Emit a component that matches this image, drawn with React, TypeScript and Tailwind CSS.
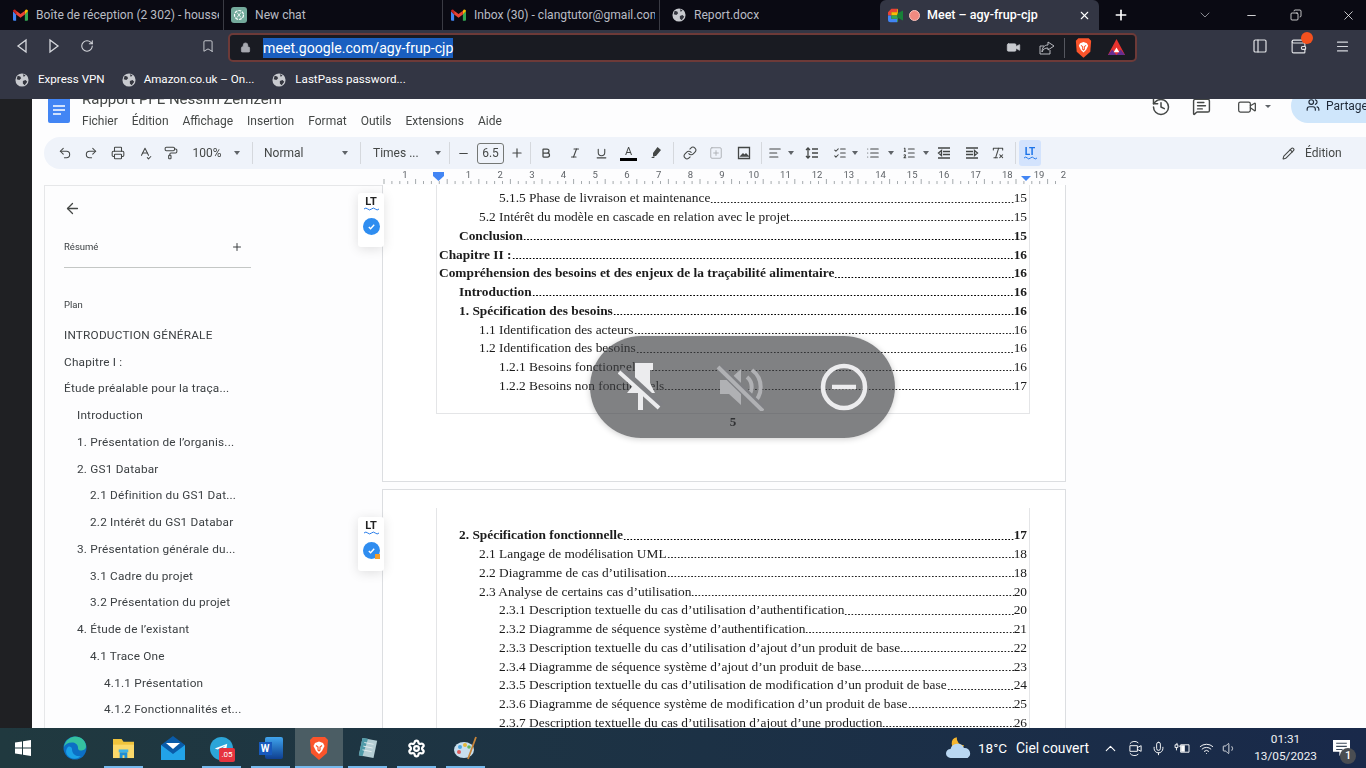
import React from 'react';
import {
  ArrowLeft, Bold, Bookmark, ChevronDown, ChevronUp, Copy, History, Italic, Link, List, ListChecks, ListOrdered, Lock, Menu, MessageSquareText, Mic, Minus, PaintRoller, PanelLeft,
  Pencil, Plus, Printer, Redo2, RotateCw, Settings, SpellCheck, SquarePlus, Underline, Undo2, Users, Video, Volume1, Wallet, Wifi, X,
  AlignLeft, RemoveFormatting,
} from 'lucide-react';

const sans = 'font-["Roboto","Liberation_Sans",sans-serif]';

const GmailIcon = () => (
  <svg viewBox="0 0 24 18" className="w-[15px] h-[12px] shrink-0">
    <path d="M0 3v13.5A1.5 1.5 0 0 0 1.5 18H5V8z" fill="#4285f4" />
    <path d="M19 8v10h3.5a1.5 1.5 0 0 0 1.5-1.500V3z" fill="#34a853" />
    <path d="M19 2v6l5-5c0-2-2.500-3.500-4-2z" fill="#fbbc04" />
    <path d="M5 8V2l7 5.500L19 2v6l-7 5.500z" fill="#ea4335" />
    <path d="M0 3c0-2 2.500-3.500 4-2l1 1v6z" fill="#c5221f" />
  </svg>
);

const GlobeIcon = ({ size = 'w-[14px] h-[14px]' }: { size?: string }) => (
  <svg viewBox="0 0 16 16" className={`${size} shrink-0`}>
    <circle cx="8" cy="8" r="7.500" fill="#c8cacf" />
    <path d="M3 3l3 1 1 2-2 2-3-1zM9 9l3-1 2 2-3 4-2-2zM9 1.500l3 1-2 2z" fill="#34363f" />
  </svg>
);

const ChatIcon = () => (
  <svg viewBox="0 0 16 16" className="w-[16px] h-[16px] shrink-0">
    <rect width="16" height="16" rx="3" fill="#74aa9c" />
    <circle cx="8" cy="8" r="4.500" fill="none" stroke="#fff" strokeWidth="1.200" strokeDasharray="3 1" />
    <path d="M6 5.500l4 5M10 5.500l-4 5" stroke="#fff" strokeWidth="0.800" />
  </svg>
);

const MeetIcon = () => (
  <svg viewBox="0 0 18 16" className="w-[15px] h-[15px] shrink-0">
    <path d="M0 4l4-4h7v4H4v4H0z" fill="#ea4335" />
    <path d="M0 8h4v4h7v4H3a3 3 0 0 1-3-3z" fill="#4285f4" />
    <path d="M11 0a1 1 0 0 1 1 1v4l-1 3V4z" fill="#fbbc04" />
    <path d="M11 8l1 3v4a1 1 0 0 1-1 1z" fill="#34a853" />
    <path d="M11 8l1-3 6-3v12l-6-3z" fill="#188038" />
    <path d="M4 4h7v4H4z" fill="#fbbc04" />
    <path d="M4 8h7v4H4z" fill="#34a853" />
  </svg>
);

const BraveIcon = ({ size }: { size: string }) => (
  <svg viewBox="0 0 20 24" className={size}>
    <path d="M4 1h12l3 3-1 13-8 7-8-7L1 4z" fill="#fb542b" />
    <path d="M6 7l4-1.500L14 7l1.500 3-2.500 5-3 3-3-3-2.500-5z" fill="#fff" />
    <path d="M7 9.500l2 1.500v3l1 1 1-1v-3l2-1.500" fill="none" stroke="#fb542b" strokeWidth="1.200" />
  </svg>
);

const BatIcon = () => (
  <svg viewBox="0 0 20 20" className="w-[19px] h-[19px]">
    <path d="M10 1l9 17H1z" fill="#e8332e" />
    <path d="M1 18l4.500-6L10 18z" fill="#662d91" />
    <path d="M19 18l-4.500-6L10 18z" fill="#662d91" />
    <path d="M10 10l3 5H7z" fill="#fff" />
  </svg>
);

const Tab = ({ width, pad, icon, title, sep = true }: { width: string; pad: string; icon: React.ReactNode; title: string; sep?: boolean }) => (
  <div className={`${width} ${pad} h-[30px] flex items-center gap-[8px] pr-[4px] overflow-hidden shrink-0 ${sep ? 'border-r border-[#3a3b44]' : ''}`}>
    {icon}
    <span className="text-[12.100px] text-[#b9bcc4] whitespace-nowrap overflow-hidden">{title}</span>
  </div>
);

const Chrome = () => (
  <div className={`${sans} shrink-0`}>
    <div className="h-[30px] bg-[#0a0a13] flex items-center">
      <Tab width="w-[224px]" pad="pl-[13px]" icon={<GmailIcon />} title="Boîte de réception (2 302) - housse" />
      <Tab width="w-[219px]" pad="pl-[7px]" icon={<ChatIcon />} title="New chat" />
      <Tab width="w-[217px]" pad="pl-[8px]" icon={<GmailIcon />} title="Inbox (30) - clangtutor@gmail.com" />
      <Tab width="w-[220px]" pad="pl-[12px]" icon={<GlobeIcon />} title="Report.docx" sep={false} />
      <div className="w-[219px] h-[30px] bg-[#333644] rounded-t-[6px] flex items-center pl-[8px] pr-[8px]">
        <MeetIcon />
        <span className="ml-[6px] w-[11px] h-[11px] rounded-full bg-[#f08a80] border border-[#fbc4be]" />
        <span className="ml-[7px] text-[12.500px] font-medium text-white whitespace-nowrap">Meet – agy-frup-cjp</span>
        <X size={13} className="ml-auto text-white" />
      </div>
      <Plus size={16} strokeWidth={2.500} className="ml-[14px] text-white" />
      <ChevronDown size={16} strokeWidth={1} className="ml-[68px] text-[#c7c9cf]" />
      <Minus size={13} strokeWidth={1.500} className="ml-[32px] text-white" />
      <Copy size={12} strokeWidth={1.500} className="ml-[32px] text-white -scale-x-100" />
      <X size={15} strokeWidth={1.200} className="ml-[39px] text-white" />
    </div>
    <div className="h-[69px] bg-[#333644]">
      <div className="h-[32px] flex items-center relative">
        <svg viewBox="0 0 12 16" className="ml-[16px] w-[12px] h-[16px]"><path d="M10 2L2 8l8 6z" fill="none" stroke="#d6d8dd" strokeWidth="1.300" /></svg>
        <svg viewBox="0 0 12 16" className="ml-[20px] w-[12px] h-[16px]"><path d="M2 2l8 6-8 6z" fill="none" stroke="#d6d8dd" strokeWidth="1.300" /></svg>
        <RotateCw size={14} strokeWidth={1.800} className="ml-[20px] text-[#d6d8dd]" />
        <Bookmark size={14} strokeWidth={1.500} className="ml-[107px] text-[#d6d8dd]" />
        <div className="ml-[13px] mt-[3px] w-[909px] h-[29px] bg-[#191b22] border-2 border-[#6d3a38] rounded-[5px] flex items-center">
          <Lock size={11} fill="#a7a9b0" strokeWidth={1.500} className="ml-[10px] text-[#a7a9b0]" />
          <span className="ml-[12px] bg-[#1a5fc0] text-white text-[14.150px] leading-[20px]">meet.google.com/agy-frup-cjp</span>
          <Video size={15} fill="#c9cbd0" strokeWidth={1} className="ml-auto text-[#c9cbd0]" />
          <svg viewBox="0 0 16 16" className="ml-[18px] w-[16px] h-[16px]">
            <path d="M11 10v4H1V6h4M9 2l6 4-6 4V8C6 8 4 9 3 12c0-4 2-7 6-7z" fill="none" stroke="#c9cbd0" strokeWidth="0.900" />
          </svg>
          <span className="ml-[9px] w-px h-[20px] bg-[#55575f]" />
          <span className="ml-[10px] flex"><BraveIcon size="w-[17px] h-[21px]" /></span>
          <span className="ml-[15px] mr-[9px] flex"><BatIcon /></span>
        </div>
        <PanelLeft size={16} strokeWidth={1.800} className="ml-[115px] text-[#e2e3e6]" />
        <span className="ml-[22px] relative flex">
          <Wallet size={17} strokeWidth={1.600} className="text-[#e2e3e6]" />
          <span className="absolute -top-[6px] left-[11px] w-[12px] h-[12px] rounded-full bg-[#f4511e]" />
        </span>
        <Menu size={15} strokeWidth={1.800} className="ml-[28px] text-[#d6d8dd]" />
      </div>
      <div className="h-[33px] flex items-center text-[11.600px] text-white pl-[15px] pt-[3px]">
        <GlobeIcon />
        <span className="ml-[9px]">Express VPN</span>
        <span className="ml-[17px]"><GlobeIcon /></span>
        <span className="ml-[8px]">Amazon.co.uk – On...</span>
        <span className="ml-[18px]"><GlobeIcon /></span>
        <span className="ml-[9px]">LastPass password...</span>
      </div>
    </div>
  </div>
);

const Sep = ({ ml = 'ml-0' }: { ml?: string }) => <span className={`${ml} w-px h-[22px] bg-[#d5d8dd] shrink-0`} />;

const Drop = ({ w }: { w: string }) => (
  <span className={`${w} flex justify-center shrink-0`}>
    <span className="border-x-[3.500px] border-x-transparent border-t-[4px] border-t-[#5f6368]" />
  </span>
);

const Cell = ({ w, children }: { w: string; children: React.ReactNode }) => (
  <span className={`${w} flex items-center justify-center shrink-0 text-[#444746]`}>{children}</span>
);

const ICON = { size: 14, strokeWidth: 1.800 };

const Glyph = ({ d, fill }: { d: string; fill?: boolean }) => (
  <svg viewBox="0 0 14 14" className="w-[14px] h-[14px]">
    <path d={d} fill={fill ? '#444746' : 'none'} stroke={fill ? 'none' : '#444746'} strokeWidth="1.300" />
  </svg>
);

const DocHeader = () => (
  <div className={`h-[38px] overflow-hidden flex ${sans}`}>
    <svg viewBox="0 0 22 32" className="ml-[16px] -mt-[8px] w-[22px] h-[32px] shrink-0">
      <path d="M2 0h13l7 7v23a2 2 0 0 1-2 2H2a2 2 0 0 1-2-2V2a2 2 0 0 1 2-2z" fill="#4285f4" />
      <path d="M5 15h12M5 19h12M5 23h8" stroke="#fff" strokeWidth="1.500" />
    </svg>
    <div className="ml-[12px] min-w-0">
      <div className="-mt-[9px] h-[18px] flex items-center text-[15px] text-[#444746] whitespace-nowrap">
        Rapport PFE Nessim Zemzem
      </div>
      <div className="mt-[4px] flex gap-[14px] text-[12px] text-[#444746] whitespace-nowrap">
        <span>Fichier</span><span>Édition</span><span>Affichage</span><span>Insertion</span>
        <span>Format</span><span>Outils</span><span>Extensions</span><span>Aide</span>
      </div>
    </div>
    <div className="ml-auto flex items-start text-[#444746]">
      <History size={20} strokeWidth={1.800} className="-mt-[2px]" />
      <MessageSquareText size={19} strokeWidth={1.800} className="ml-[21px] -mt-[2px]" />
      <Video size={20} strokeWidth={1.500} className="ml-[26px] -mt-[2px] mr-[8px]" />
      <span className="mt-[6px] border-x-[3px] border-x-transparent border-t-[3.500px] border-t-[#5f6368]" />
      <div className="ml-[20px] -mt-[10px] w-[75px] h-[34px] bg-[#cfe6fb] rounded-l-[18px] pl-[15px] pt-[8px] flex items-start gap-[6px] text-[12px] text-[#1f2937] overflow-hidden">
        <Users size={14} strokeWidth={2} className="shrink-0 mt-[1px]" />
        <span>Partager</span>
      </div>
    </div>
  </div>
);

const DocToolbar = () => (
  <div className={`ml-[12px] h-[32px] bg-[#eff3fa] rounded-l-[16px] flex items-center pl-[8px] text-[12px] text-[#444746] ${sans}`}>
    <Cell w="w-[26px]"><Undo2 {...ICON} /></Cell>
    <Cell w="w-[26px]"><Redo2 {...ICON} /></Cell>
    <Cell w="w-[28px]"><Printer {...ICON} /></Cell>
    <Cell w="w-[26px]"><SpellCheck {...ICON} /></Cell>
    <Cell w="w-[26px]"><PaintRoller {...ICON} /></Cell>
    <Cell w="w-[46px]">100%</Cell>
    <Drop w="w-[14px]" />
    <Sep ml="ml-[8px]" />
    <span className="w-[84px] pl-[11px]">Normal</span>
    <Drop w="w-[16px]" />
    <Sep ml="ml-[7px]" />
    <span className="w-[72px] pl-[12px] whitespace-nowrap">Times ...</span>
    <Drop w="w-[10px]" />
    <Sep ml="ml-[6px]" />
    <Cell w="w-[27px]"><Minus size={13} /></Cell>
    <span className="w-[27px] h-[21px] border border-[#747775] rounded-[3px] flex items-center justify-center shrink-0">6.5</span>
    <Cell w="w-[26px]"><Plus size={14} /></Cell>
    <Sep />
    <Cell w="w-[30px]"><Bold size={12} strokeWidth={2.500} /></Cell>
    <Cell w="w-[27px]"><Italic size={12} strokeWidth={2.200} /></Cell>
    <Cell w="w-[27px]"><Underline size={13} strokeWidth={2} /></Cell>
    <span className="w-[27px] flex flex-col items-center shrink-0 text-[11px] leading-[13px]">A<span className="w-[17px] h-[3px] bg-black" /></span>
    <Cell w="w-[28px]"><Glyph fill d="M8.500 1l3.500 3-5 6H4v-3zM2 12l2-1.500h2L5 12z" /></Cell>
    <Sep ml="ml-[3px]" />
    <Cell w="w-[31px]"><Link {...ICON} /></Cell>
    <Cell w="w-[22px]"><SquarePlus size={14} strokeWidth={1.500} className="text-[#a8abb0]" /></Cell>
    <Cell w="w-[33px]"><Glyph d="M1.500 1.500h11v11h-11zM4 10l2-2 1.500 1.500L9 8l2 2z" /></Cell>
    <Sep ml="ml-[1px]" />
    <Cell w="w-[26px]"><AlignLeft {...ICON} /></Cell>
    <Drop w="w-[6px]" />
    <Cell w="w-[36px]"><Glyph d="M3 2v10M1 4l2-2 2 2M1 10l2 2 2-2M7 3h6M7 7h6M7 11h6" /></Cell>
    <Cell w="w-[20px]"><ListChecks {...ICON} /></Cell>
    <Drop w="w-[10px]" />
    <Cell w="w-[26px]"><List {...ICON} /></Cell>
    <Drop w="w-[10px]" />
    <Cell w="w-[26px]"><ListOrdered {...ICON} /></Cell>
    <Drop w="w-[8px]" />
    <Cell w="w-[28px]"><Glyph d="M1 2h12M6 5.500h7M6 8.500h7M1 12h12M4.500 4.500L1.500 7l3 2.500z" /></Cell>
    <Cell w="w-[27px]"><Glyph d="M1 2h12M1 5.500h7M1 8.500h7M1 12h12M9.500 4.500l3 2.500-3 2.500z" /></Cell>
    <Cell w="w-[26px]"><RemoveFormatting {...ICON} /></Cell>
    <Sep ml="ml-[4px]" />
    <span className="ml-[3px] w-[22px] h-[26px] bg-[#d3e3fd] rounded-[3px] flex flex-col items-center justify-center shrink-0 text-[#1a73e8] text-[10px] leading-[9px] font-bold">
      LT
      <svg viewBox="0 0 14 4" className="w-[13px] h-[4px]"><path d="M0 2q2-2 3.500 0t3.500 0 3.500 0 3.500 0" fill="none" stroke="#1a73e8" /></svg>
    </span>
    <Pencil size={13} strokeWidth={2} className="ml-[241px]" />
    <span className="ml-[10px]">Édition</span>
  </div>
);

const Ruler = () => {
  const nums = ['1', '', '1', '2', '3', '4', '5', '6', '7', '8', '9', '10', '11', '12', '13', '14', '15', '16', '17', '18', '19'];
  const ticks = Array.from({ length: 86 }, (_, i) => i);
  return (
    <div className="h-[16px] pl-[350px]">
      <svg width="684" height="16" className="block">
        {ticks.map((i) => (
          <line key={i} x1={i * 7.900 + 2} x2={i * 7.900 + 2} y1={i % 4 === 0 ? 10 : 12} y2={15} stroke="#80868b" strokeWidth="0.700" />
        ))}
        {nums.map((n, i) => (
          <text key={i} x={23 + i * 31.700} y={9} fontSize="9.500" fill="#5f6368" textAnchor="middle" fontFamily="Roboto, sans-serif">{n}</text>
        ))}
        <text x={684} y={9} fontSize="9.500" fill="#5f6368" textAnchor="end" fontFamily="Roboto, sans-serif">2</text>
        <path d="M51 3h11v4l-5.500 5L51 7z" fill="#4285f4" />
        <path d="M639 7h10l-5 5z" fill="#4285f4" />
      </svg>
    </div>
  );
};

const outline: [string, string][] = [
  ['INTRODUCTION GÉNÉRALE', 'pl-0'],
  ['Chapitre I :', 'pl-0'],
  ['Étude préalable pour la traça...', 'pl-0'],
  ['Introduction', 'pl-[13px]'],
  ['1. Présentation de l’organis...', 'pl-[13px]'],
  ['2. GS1 Databar', 'pl-[13px]'],
  ['2.1 Définition du GS1 Dat...', 'pl-[26px]'],
  ['2.2 Intérêt du GS1 Databar', 'pl-[26px]'],
  ['3. Présentation générale du...', 'pl-[13px]'],
  ['3.1 Cadre du projet', 'pl-[26px]'],
  ['3.2 Présentation du projet', 'pl-[26px]'],
  ['4. Étude de l’existant', 'pl-[13px]'],
  ['4.1 Trace One', 'pl-[26px]'],
  ['4.1.1 Présentation', 'pl-[40px]'],
  ['4.1.2 Fonctionnalités et...', 'pl-[40px]'],
];

const Sidebar = () => (
  <div className={`w-[338px] shrink-0 border-l border-t border-[#e6e7e9] pl-[19px] ${sans} text-[#3c4043]`}>
    <ArrowLeft size={17} strokeWidth={1.800} className="mt-[14px] text-[#444746]" />
    <div className="mt-[23px] w-[187px] pb-[13px] border-b border-[#c4c7c5] flex items-center justify-between text-[9.500px]">
      <span>Résumé</span>
      <Plus size={12} strokeWidth={2} className="mr-[8px]" />
    </div>
    <div className="mt-[31px] text-[9.500px] leading-[12px]">Plan</div>
    <div className="mt-[11px] text-[11.800px] tracking-[0.2px]">
      {outline.map(([title, indent], i) => (
        <div key={i} className={`h-[26.750px] flex items-center whitespace-nowrap ${indent}`}>{title}</div>
      ))}
    </div>
  </div>
);

interface Entry { title: string; page: string; indent: string; bold?: boolean }

const firstPage: Entry[] = [
  { title: '5.1.5 Phase de livraison et maintenance', page: '15', indent: 'pl-[60px]' },
  { title: '5.2 Intérêt du modèle en cascade en relation avec le projet', page: '15', indent: 'pl-[40px]' },
  { title: 'Conclusion', page: '15', indent: 'pl-[20px]', bold: true },
  { title: 'Chapitre II :', page: '16', indent: 'pl-0', bold: true },
  { title: 'Compréhension des besoins et des enjeux de la traçabilité alimentaire', page: '16', indent: 'pl-0', bold: true },
  { title: 'Introduction', page: '16', indent: 'pl-[20px]', bold: true },
  { title: '1. Spécification des besoins', page: '16', indent: 'pl-[20px]', bold: true },
  { title: '1.1 Identification des acteurs', page: '16', indent: 'pl-[40px]' },
  { title: '1.2 Identification des besoins', page: '16', indent: 'pl-[40px]' },
  { title: '1.2.1 Besoins fonctionnels', page: '16', indent: 'pl-[60px]' },
  { title: '1.2.2 Besoins non fonctionnels', page: '17', indent: 'pl-[60px]' },
];

const secondPage: Entry[] = [
  { title: '2. Spécification fonctionnelle', page: '17', indent: 'pl-[20px]', bold: true },
  { title: '2.1 Langage de modélisation UML', page: '18', indent: 'pl-[40px]' },
  { title: '2.2 Diagramme de cas d’utilisation', page: '18', indent: 'pl-[40px]' },
  { title: '2.3 Analyse de certains cas d’utilisation', page: '20', indent: 'pl-[40px]' },
  { title: '2.3.1 Description textuelle du cas d’utilisation d’authentification', page: '20', indent: 'pl-[60px]' },
  { title: '2.3.2 Diagramme de séquence système d’authentification', page: '21', indent: 'pl-[60px]' },
  { title: '2.3.3 Description textuelle du cas d’utilisation d’ajout d’un produit de base', page: '22', indent: 'pl-[60px]' },
  { title: '2.3.4 Diagramme de séquence système d’ajout d’un produit de base', page: '23', indent: 'pl-[60px]' },
  { title: '2.3.5 Description textuelle du cas d’utilisation de modification d’un produit de base', page: '24', indent: 'pl-[60px]' },
  { title: '2.3.6 Diagramme de séquence système de modification d’un produit de base', page: '25', indent: 'pl-[60px]' },
  { title: '2.3.7 Description textuelle du cas d’utilisation d’ajout d’une production', page: '26', indent: 'pl-[60px]' },
];

const TocRow = ({ entry }: { entry: Entry }) => (
  <div className={`h-[18.750px] flex items-center whitespace-nowrap ${entry.indent} ${entry.bold ? 'font-bold' : ''}`}>
    <span className="shrink-0">{entry.title}</span>
    <span
      className={`flex-1 self-stretch min-w-0 bg-repeat-x bg-[length:3.350px_3px] bg-[position:0_11.500px] ${
        entry.bold
          ? 'bg-[radial-gradient(circle,#000_0.8px,transparent_1px)]'
          : 'bg-[radial-gradient(circle,#222_0.5px,transparent_0.8px)]'
      }`}
    />
    <span className="shrink-0">{entry.page}</span>
  </div>
);

const LtWidget = ({ pos, dot }: { pos: string; dot?: boolean }) => (
  <div className={`absolute ${pos} w-[26px] h-[54px] bg-white rounded-[3px] shadow-[0_2px_12px_rgba(0,0,0,0.12)] flex flex-col items-center pt-[4px]`}>
    <span className={`text-[11px] leading-[10px] font-bold text-[#222] ${sans}`}>LT</span>
    <svg viewBox="0 0 16 4" className="w-[15px] h-[4px]"><path d="M0 2q2-2 4 0t4 0 4 0 4 0" fill="none" stroke="#1a73e8" strokeWidth="1" /></svg>
    <span className="relative mt-[7px] w-[17px] h-[17px] rounded-full bg-[#2f8df0] flex items-center justify-center">
      <svg viewBox="0 0 10 10" className="w-[9px] h-[9px]"><path d="M2 5.500l2 2 4-4.500" fill="none" stroke="#fff" strokeWidth="1.500" /></svg>
      {dot && <span className="absolute right-0 bottom-0 w-[5px] h-[5px] bg-[#f59e2c]" />}
    </span>
  </div>
);

const Pages = () => (
  <div className="w-[684px] shrink-0 font-['Liberation_Serif',serif] text-[13.380px] text-[#1b1b1b]">
    <div className="relative h-[297px] bg-white border-x border-b border-[#dcdee1] pl-[53px] pr-[35px]">
      <LtWidget pos="-left-[25px] top-[8px]" />
      <div className="h-[229px] border-x border-b border-[#e4e5e7] pt-[4px] pl-[2px] pr-[2px]">
        {firstPage.map((e, i) => <TocRow key={i} entry={e} />)}
      </div>
      <div className="mt-[0px] text-center font-bold text-[13px] leading-[15px]">5</div>
    </div>
    <div className="h-[7px]" />
    <div className="relative h-[240px] bg-white border-x border-t border-[#dcdee1] pl-[53px] pr-[35px] pt-[18px]">
      <LtWidget pos="-left-[25px] top-[27px]" dot />
      <div className="h-[222px] border-x border-[#e4e5e7] pt-[18px] pl-[2px] pr-[2px]">
        {secondPage.map((e, i) => <TocRow key={i} entry={e} />)}
      </div>
    </div>
  </div>
);

const Overlay = () => (
  <div className="absolute left-[590px] top-[336px] w-[305px] h-[102px] rounded-[51px] bg-[#3c3d41]/65 shadow-[0_1px_6px_rgba(0,0,0,0.2)] flex items-center">
    <svg viewBox="0 0 48 48" className="ml-[28px] w-[48px] h-[48px]">
      <path d="M17 0h18v7h-3v13l5 10H25v17h-5V30H9l8-10z" fill="#ececee" />
      <path d="M3 6l40 37" stroke="#7f8084" strokeWidth="7" />
      <path d="M1 9l40 36" stroke="#ececee" strokeWidth="4" />
    </svg>
    <svg viewBox="0 0 48 48" className="ml-[50px] w-[48px] h-[48px]">
      <path d="M4 17h9l12-11v36L13 31H4z" fill="#b0b1b4" />
      <path d="M31 14a13 13 0 0 1 0 20M36 7a21 21 0 0 1 0 34" fill="none" stroke="#b0b1b4" strokeWidth="4" />
      <path d="M4 5l42 41" stroke="#7f8084" strokeWidth="8" />
      <path d="M2 4l45 44" stroke="#b0b1b4" strokeWidth="4" />
    </svg>
    <svg viewBox="0 0 48 48" className="ml-[56px] w-[48px] h-[48px]">
      <circle cx="24" cy="24" r="21" fill="none" stroke="#ececee" strokeWidth="4.500" />
      <path d="M12 24h24" stroke="#ececee" strokeWidth="4.500" />
    </svg>
  </div>
);

const EdgeIcon = () => (
  <svg viewBox="0 0 24 24" className="w-[24px] h-[24px]">
    <circle cx="12" cy="12" r="11.500" fill="#0c6fc4" />
    <path d="M1 11C2 4 8 .5 12 .5c6 0 11 4 11 10 0 3-3 4-5 4-3 0-3-2-3-3 0-3-3-5-6-5-4 0-7 2-8 4.500z" fill="#35c1a0" />
    <path d="M9 13c0 5 4 8 9 7-3 3-9 4-13 0-3-3-2-7 0-9 1.500-1 4 0 4 2z" fill="#1aa1e6" />
  </svg>
);

const TaskCell = ({ children, open }: { children: React.ReactNode; open?: boolean }) => (
  <div className="w-[49px] h-[40px] flex items-center justify-center relative shrink-0">
    {children}
    {open && <span className="absolute bottom-0 inset-x-[5px] h-[2px] bg-[#76b9ed]" />}
  </div>
);

const Taskbar = () => (
  <div className={`h-[40px] shrink-0 bg-gradient-to-r from-[#20393f] to-[#19294a] flex items-center text-white ${sans}`}>
    <div className="w-[50px] flex items-center justify-center pr-[4px]">
      <svg viewBox="0 0 16 16" className="w-[16px] h-[16px]">
        <path d="M0 2.500l7-1v6H0zM8 1.300L16 0v7.500H8zM0 8.500h7v6l-7-1zM8 8.500h8V16l-8-1.200z" fill="#fff" />
      </svg>
    </div>
    <TaskCell><EdgeIcon /></TaskCell>
    <TaskCell open>
      <svg viewBox="0 0 24 22" className="w-[23px] h-[21px]">
        <path d="M1 1h9l2 3h11v17H1z" fill="#f0c33c" /><path d="M1 7h22v14H1z" fill="#fbd96a" /><path d="M8 15h8v6h-3v-3h-2v3H8z" fill="#1f8fd6" /><path d="M7 12h10v3H7z" fill="#3db1e8" />
      </svg>
    </TaskCell>
    <TaskCell>
      <svg viewBox="0 0 24 24" className="w-[24px] h-[24px]">
        <path d="M12 0l12 9v15H0V9z" fill="#0a5ba8" /><path d="M0 9l12 9 12-9v15H0z" fill="#22a3e8" /><path d="M5 7h14l-7 6z" fill="#fff" />
      </svg>
    </TaskCell>
    <TaskCell open>
      <span className="relative flex">
        <svg viewBox="0 0 24 24" className="w-[23px] h-[23px]">
          <circle cx="12" cy="12" r="12" fill="#2ca5d8" /><path d="M5 12l13-5-2 11-4-3-2 2v-3l6-5-8 4z" fill="#fff" />
        </svg>
        <span className="absolute left-[9px] top-[11px] w-[16px] h-[14px] bg-[#e6333f] rounded-[2px] text-[8px] leading-[14px] text-center">.05</span>
      </span>
    </TaskCell>
    <TaskCell open>
      <span className="relative w-[24px] h-[22px] flex">
        <span className="absolute right-0 top-0 w-[18px] h-[22px] rounded-[2px] bg-gradient-to-b from-[#41a5ee] to-[#103f91]" />
        <span className="absolute left-0 top-[5px] w-[13px] h-[13px] bg-[#185abd] text-[10px] leading-[13px] font-bold text-center">W</span>
      </span>
    </TaskCell>
    <div className="w-[48px] h-[40px] bg-[#4b5d64] relative flex items-center justify-center shrink-0">
      <BraveIcon size="w-[20px] h-[24px]" />
      <span className="absolute inset-x-0 bottom-0 h-[2px] bg-[#76b9ed]" />
    </div>
    <TaskCell open>
      <svg viewBox="0 0 24 24" className="w-[22px] h-[24px]">
        <path d="M6 1l16 3-4 19L2 20z" fill="#b5ced4" /><path d="M6 1l6 1-6 19-4-1z" fill="#4f9aa8" /><path d="M8 6l10 2M7 10l10 2M6 14l10 2" stroke="#e6eff1" />
      </svg>
    </TaskCell>
    <TaskCell open><Settings size={19} strokeWidth={2.800} /></TaskCell>
    <TaskCell open>
      <svg viewBox="0 0 24 24" className="w-[24px] h-[24px]">
        <ellipse cx="10" cy="14" rx="10" ry="8" fill="#c9dfee" /><circle cx="6" cy="11" r="2" fill="#4da6de" /><circle cx="11" cy="9" r="2" fill="#e8b838" /><circle cx="5" cy="16" r="2" fill="#dc5a5a" /><circle cx="15" cy="11" r="1.800" fill="#63b55d" />
        <path d="M22 1l-8 22" stroke="#c7853a" strokeWidth="1.800" />
      </svg>
    </TaskCell>
    <svg viewBox="0 0 30 26" className="ml-[456px] w-[27px] h-[24px] shrink-0">
      <path d="M12 1a7 7 0 1 0 8 9 8 8 0 0 1-8-9z" fill="#f5b52e" />
      <path d="M5 24a5 5 0 0 1 0-10 8 8 0 0 1 15-1 6 6 0 0 1 4 11z" fill="#b9d7f2" />
    </svg>
    <span className="ml-[5px] w-[33px] text-[13.500px]">18°C</span>
    <span className="ml-[5px] text-[13.900px] whitespace-nowrap">Ciel couvert</span>
    <ChevronUp size={17} strokeWidth={1.500} className="ml-[13px]" />
    <svg viewBox="0 0 16 16" className="ml-[9px] w-[15px] h-[15px]">
      <path d="M2 3a6 6 0 0 1 9-1M2 13a6 6 0 0 0 9 1M2 5h8v6H2zM10 7l4-2v6l-4-2" fill="none" stroke="#fff" strokeWidth="1" />
    </svg>
    <Mic size={15} strokeWidth={1.500} className="ml-[8px]" />
    <svg viewBox="0 0 18 14" className="ml-[8px] w-[17px] h-[13px]">
      <path d="M1 3v3h3V3zM2.500 6v3M3 1v2M5 4.500h2M7 3h9v8H7z" fill="none" stroke="#fff" strokeWidth="1" />
      <path d="M7.500 3.500h4v7h-4z" fill="#fff" />
    </svg>
    <Wifi size={15} strokeWidth={1.500} className="ml-[8px]" />
    <Volume1 size={15} strokeWidth={1.300} className="ml-[8px]" />
    <div className="ml-[13px] w-[71px] text-center text-[11.800px] leading-[17px] text-[#f0f2f5]">
      <div>01:31</div>
      <div>13/05/2023</div>
    </div>
    <span className="ml-[12px] relative flex">
      <svg viewBox="0 0 16 16" className="w-[17px] h-[17px]"><path d="M0 0h16v11H9l-3 4v-4H0z" fill="#fff" /><path d="M3 3h10M3 6h10M3 9h6" stroke="#3c4a5a" /></svg>
      <span className="absolute left-[7px] top-[8px] w-[16px] h-[16px] rounded-full bg-[#4a4d52] text-[11px] leading-[16px] text-center font-medium">1</span>
    </span>
  </div>
);

export default function App() {
  return (
    <div className="w-[1366px] h-[768px] overflow-hidden flex flex-col relative bg-[#1f2023]">
      <Chrome />
      <div className="h-[629px] ml-[32px] bg-[#fdfdfe] overflow-hidden blur-[0.35px]">
        <DocHeader />
        <DocToolbar />
        <Ruler />
        <div className="ml-[12px] flex">
          <Sidebar />
          <Pages />
        </div>
      </div>
      <Overlay />
      <Taskbar />
    </div>
  );
}
